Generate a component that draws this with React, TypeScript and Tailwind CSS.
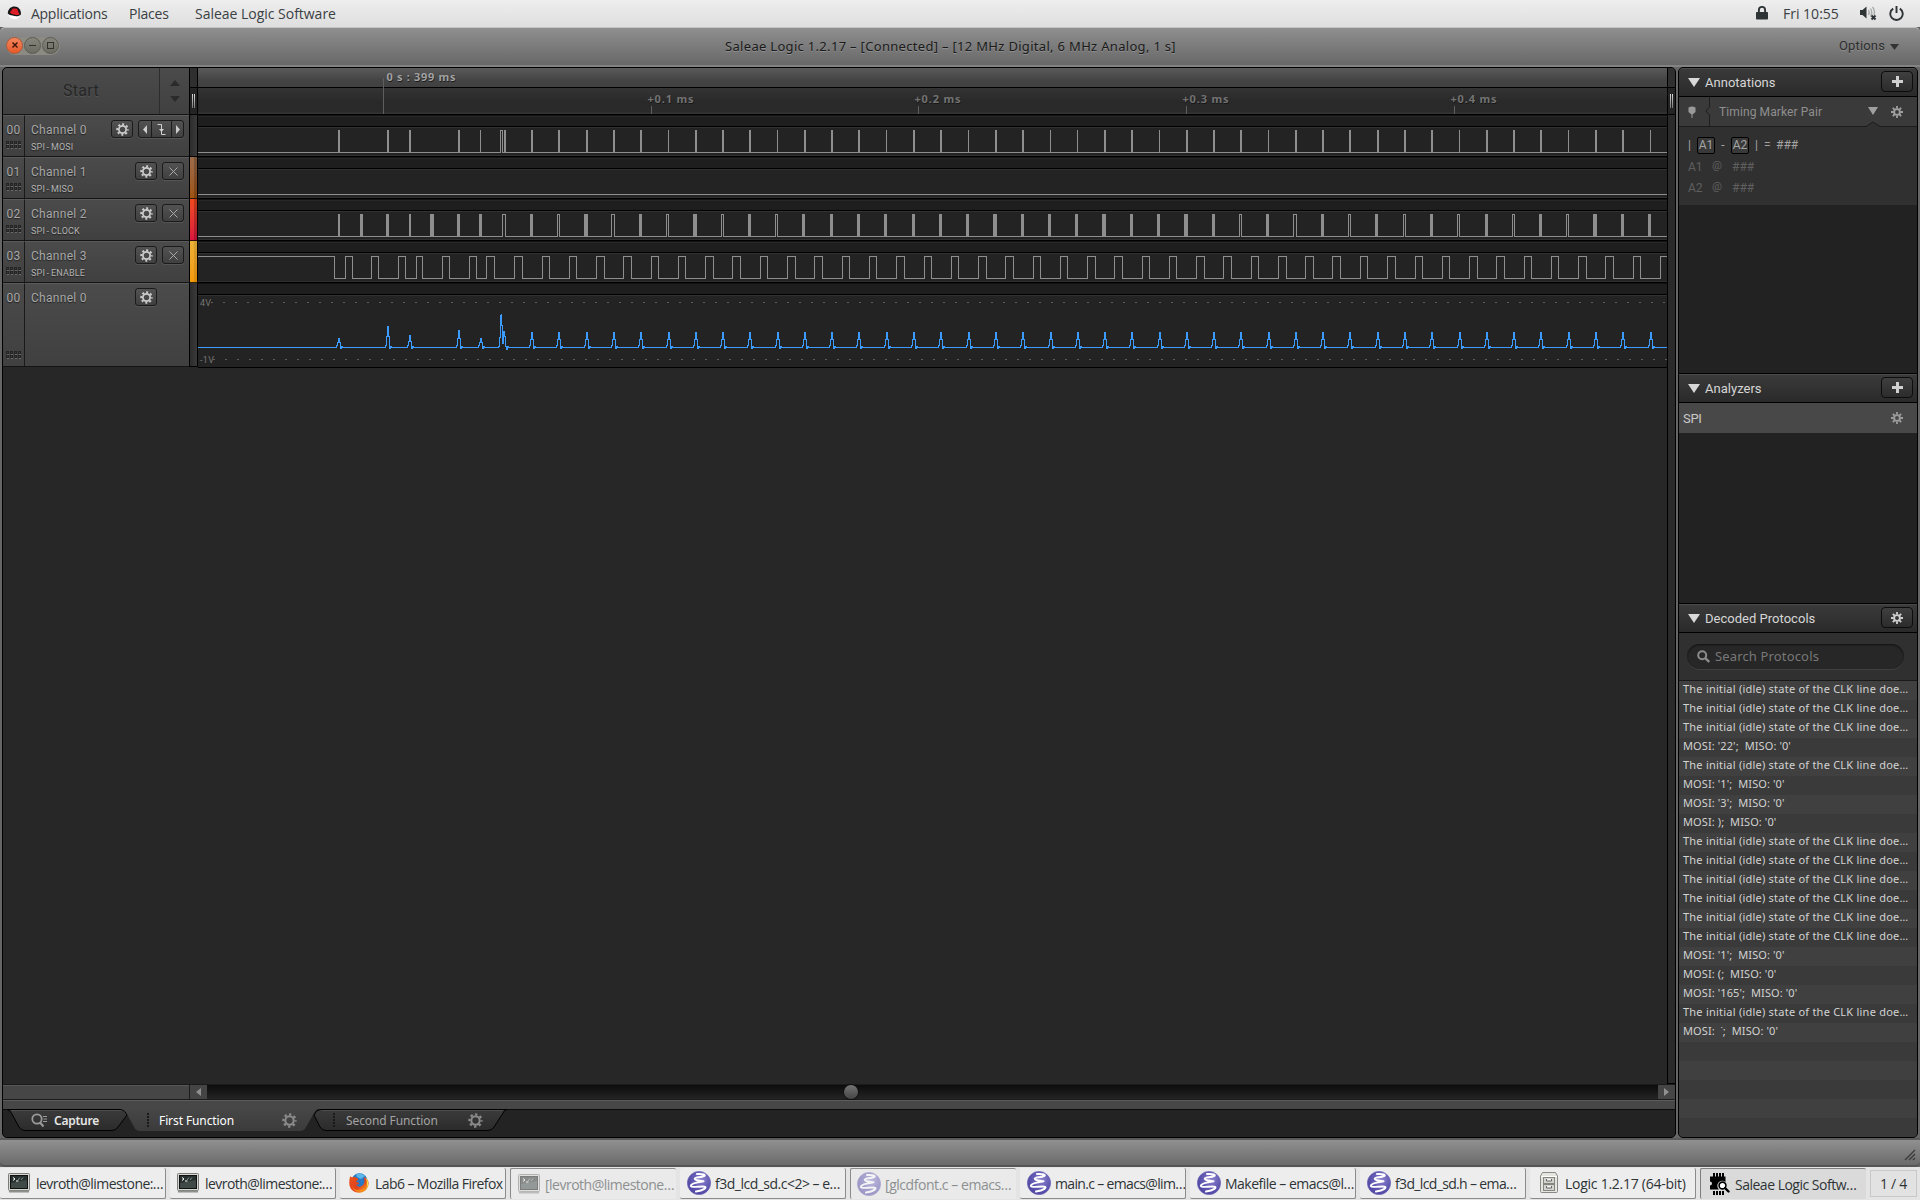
import React from "react";

/* ---------- signal data (window x coordinates) ---------- */

const ORIGIN = 198;

type Pulse = [number, number];

const MOSI: Pulse[] = [
  [338, 2], [387, 2], [409, 2], [458, 2], [480, 1], [504, 2], [531, 2], [558, 2], [586, 2], [613, 2],
  [640, 2], [668, 1], [695, 2], [722, 2], [749, 2], [777, 1], [804, 2], [831, 2], [858, 2], [886, 1],
  [913, 2], [940, 2], [968, 1], [995, 2], [1022, 2], [1050, 1], [1077, 1], [1104, 2], [1131, 2], [1159, 1],
  [1186, 2], [1213, 2], [1240, 2], [1268, 1], [1295, 2], [1322, 2], [1349, 2], [1377, 2], [1404, 2],
  [1431, 2], [1459, 1], [1486, 2], [1513, 2], [1540, 2], [1568, 1], [1595, 2], [1622, 2], [1650, 1],
];
const MOSI_HOLLOW: Pulse[] = [[500, 3]];

const CLOCK: Pulse[] = [
  [338, 2], [360, 3], [386, 3], [409, 2], [430, 4], [457, 3], [479, 3], [530, 3], [584, 4], [639, 3],
  [693, 4], [748, 3], [802, 3], [830, 3], [857, 3], [884, 3], [912, 3], [939, 3], [966, 3], [993, 4],
  [1021, 3], [1048, 3], [1075, 3], [1102, 4], [1130, 3], [1157, 3], [1184, 4], [1212, 3], [1266, 3],
  [1321, 3], [1375, 3], [1430, 3], [1485, 3], [1539, 3], [1593, 4], [1621, 3], [1648, 3],
];
const CLOCK_HOLLOW: Pulse[] = [
  [502, 4], [557, 3], [611, 4], [666, 3], [721, 3], [775, 3], [1239, 3], [1293, 4], [1348, 3], [1403, 3],
  [1457, 3], [1512, 3], [1566, 3],
];

const ENABLE: Pulse[] = [
  [345, 352], [371, 378], [398, 405], [416, 422], [442, 449], [469, 476], [486, 494], [514, 522],
  [542, 549], [569, 576], [596, 604], [623, 631], [651, 658], [678, 685], [705, 713], [732, 740],
  [760, 767], [787, 795], [814, 822], [842, 849], [869, 876], [896, 904], [924, 931], [951, 958],
  [978, 986], [1005, 1013], [1033, 1040], [1060, 1067], [1087, 1095], [1114, 1122], [1142, 1149],
  [1169, 1176], [1196, 1204], [1223, 1231], [1251, 1258], [1278, 1286], [1305, 1313], [1332, 1340],
  [1360, 1367], [1387, 1395], [1415, 1422], [1442, 1449], [1469, 1477], [1496, 1504], [1524, 1531],
  [1551, 1558], [1578, 1586], [1605, 1613], [1633, 1640],
];

/* ---------- waveform drawings ---------- */

const STROKE = "#8e8e8e";

function PulseWave({ solid = [], hollow = [] }: { solid?: Pulse[]; hollow?: Pulse[] }) {
  return (
    <svg className="block" width={1469} height={27} shapeRendering="crispEdges">
      <rect x={0} y={24} width={1469} height={1} fill={STROKE} />
      {solid.map(([x, w]) => (
        <rect key={x} x={x - ORIGIN} y={2} width={w} height={23} fill={STROKE} />
      ))}
      {hollow.map(([x, w]) => (
        <g key={x}>
          <rect x={x - ORIGIN} y={2} width={w} height={23} fill={STROKE} />
          <rect x={x - ORIGIN + 1} y={3} width={w - 2} height={22} fill="#232323" />
        </g>
      ))}
    </svg>
  );
}

function EnableWave() {
  let d = `M0 2.5H${334 - ORIGIN + 0.5}V24.5`;
  for (const [a, b] of ENABLE) d += `H${a - ORIGIN + 0.5}V2.5H${b - ORIGIN + 0.5}V24.5`;
  d += `H${1660 - ORIGIN + 0.5}V2.5H1469`;
  return (
    <svg className="block" width={1469} height={27} shapeRendering="crispEdges">
      <path d={d} fill="none" stroke={STROKE} />
    </svg>
  );
}

function AnalogWave() {
  const base = 51.5;
  const tall: Record<number, number> = { 338: 42, 387: 30, 409: 39, 458: 34, 480: 42 };
  let d = `M0 ${base}`;
  for (const [x] of MOSI) {
    const c = x - ORIGIN + 0.5;
    if (x === 504) {
      const s = 500 - ORIGIN + 0.5;
      d += `H${s - 2}V50H${s - 1}V41H${s}V19H${s + 1}V18V29H${s + 2}V47H${s + 3}V35H${s + 4}V40H${s + 5}V50H${s + 6}V53H${s + 7}V50.5H${s + 8}V${base}`;
      continue;
    }
    const p = tall[x] ?? 36;
    const mid = p + (base - p) * 0.5;
    d += `H${c - 2}V49H${c - 1}V${mid}H${c}V${p}H${c + 1}V${mid}H${c + 2}V${base + 1}H${c + 3}V50.5H${c + 4}V${base}`;
  }
  d += `H1469`;
  return (
    <svg className="block" width={1469} height={81} shapeRendering="crispEdges">
      <path d="M13 6.5H1469" stroke="#5c5c5c" strokeDasharray="2 10" />
      <path d="M15 63.5H1469" stroke="#5c5c5c" strokeDasharray="2 10" />
      <text x={2} y={10} fontSize={9} textLength={11} fill="#777" fontFamily="Roboto, sans-serif">4V</text>
      <text x={2} y={67} fontSize={9} textLength={14} fill="#777" fontFamily="Roboto, sans-serif">-1V</text>
      <path d={d} fill="none" stroke="#3c9bff" />
    </svg>
  );
}

function Ruler() {
  const marks: [number, string][] = [[651, "+0.1 ms"], [918, "+0.2 ms"], [1186, "+0.3 ms"], [1454, "+0.4 ms"]];
  return (
    <svg className="block" width={1469} height={46} fontFamily='"Noto Sans", sans-serif' fontWeight={700} fontSize={11}>
      <path d="M0 19.5H1469" stroke="#000" shapeRendering="crispEdges" />
      <path d="M185.5 10V46" stroke="#5e5e5e" shapeRendering="crispEdges" />
      <text x={189} y={14} textLength={69} fill="#1c1c1c">0 s : 399 ms</text>
      <text x={188.5} y={13} textLength={69} fill="#a2a2a2">0 s : 399 ms</text>
      {marks.map(([x, label]) => (
        <g key={x}>
          <path d={`M${x - ORIGIN + 0.5} 38V46`} stroke="#5e5e5e" shapeRendering="crispEdges" />
          <text x={x - ORIGIN - 3} y={36} textLength={46} fill="#161616">{label}</text>
          <text x={x - ORIGIN - 3.5} y={35} textLength={46} fill="#737373">{label}</text>
        </g>
      ))}
    </svg>
  );
}

/* ---------- icons ---------- */

function Gear({ size = 14, color = "#cdcdcd", className = "" }: { size?: number; color?: string; className?: string }) {
  return (
    <svg className={`shrink-0 ${className}`} width={size} height={size} viewBox="0 0 14 14" fill="none" stroke={color}>
      <circle cx={7} cy={7} r={3.9} strokeWidth={1.9} />
      <circle cx={7} cy={7} r={5.7} strokeWidth={2} strokeDasharray="2.2 2.277" strokeDashoffset={1.1} />
    </svg>
  );
}

function SmallGear({ color }: { color: string }) {
  return (
    <svg className="shrink-0" width={12} height={12} viewBox="0 0 12 12" fill="none" stroke={color}>
      <circle cx={6} cy={6} r={2.9} strokeWidth={1.9} />
      <path d="M6 0V2.6M6 9.4V12M0 6H2.6M9.4 6H12M1.8 1.8L3.6 3.6M8.4 8.4L10.2 10.2M1.8 10.2L3.6 8.4M8.4 3.6L10.2 1.8" strokeWidth={1.8} />
    </svg>
  );
}

function Grip() {
  const xs = [0, 4, 8, 12];
  return (
    <svg width={16} height={8} shapeRendering="crispEdges">
      {[0, 4].map((y) =>
        xs.map((x) => (
          <g key={`${x}-${y}`}>
            <rect x={x} y={y} width={3} height={3} fill="#242424" />
            <rect x={x + 1} y={y + 1} width={1} height={1} fill="#3c3c3c" />
            <rect x={x + 1} y={y + 3} width={2} height={1} fill="#6a6a6a" />
          </g>
        ))
      )}
    </svg>
  );
}

function TerminalIcon() {
  return (
    <svg className="shrink-0" width={22} height={20} viewBox="0 0 22 20">
      <rect x={0.5} y={0.5} width={21} height={17} rx={1} fill="#d5d7d2" stroke="#7b7d79" />
      <rect x={1} y={17.5} width={20} height={2} fill="#8e908b" />
      <rect x={2.5} y={2.5} width={17} height={13} fill="#27302e" stroke="#111" />
      <path d="M3 10L19 7V15H3Z" fill="#3f4a47" />
      <path d="M5 4.5L7 6L5 7.5M8 8H10.5" stroke="#fff" fill="none" />
      <path d="M10 7L12 4.5M13 7L15 4.5" stroke="#9aa" fill="none" strokeWidth={0.8} />
    </svg>
  );
}

function EmacsIcon() {
  return (
    <svg className="shrink-0" width={24} height={24} viewBox="0 0 24 24">
      <defs>
        <radialGradient id="em" cx="0.6" cy="0.35" r="0.75">
          <stop offset="0" stopColor="#8e85d0" />
          <stop offset="0.55" stopColor="#5f57b0" />
          <stop offset="1" stopColor="#4a3f9c" />
        </radialGradient>
      </defs>
      <circle cx={12} cy={12} r={11.6} fill="url(#em)" stroke="#6c66b4" strokeWidth={0.7} />
      <path
        d="M10 3C16 2.6 19.5 4 17 5.2C13.5 6.7 8 6 7.8 7.8C7.7 9.6 13 9.8 16.5 10.3C12.5 10.9 3.6 12.4 3.8 14.9C4 17 12.5 15.2 17.4 15.7C20.5 16.2 17 19.4 9 20.6"
        stroke="#fff"
        strokeWidth={2}
        fill="none"
        strokeLinecap="round"
        strokeLinejoin="round"
      />
    </svg>
  );
}

function FirefoxIcon() {
  return (
    <svg className="shrink-0" width={20} height={20} viewBox="0 0 20 20">
      <defs>
        <linearGradient id="ffx" x1="0" y1="0" x2="1" y2="1">
          <stop offset="0" stopColor="#e8541a" />
          <stop offset="0.55" stopColor="#e2401b" />
          <stop offset="1" stopColor="#ffc21f" />
        </linearGradient>
      </defs>
      <circle cx={10.5} cy={8.5} r={8.3} fill="#2a78c4" />
      <path d="M7 1.5C10 0 14 0.5 16 3L12 6L8 4Z" fill="#59b7ea" />
      <path
        d="M1.2 3.2C1.8 4 2.6 4.3 3.6 4.2C5 3.6 6.5 4 7.5 5C9 5.3 9.6 6 9 6.8C8 7.8 7 8 7.2 9C8.6 9.4 9.8 9.6 10.2 10.2C9 11.6 8 11.8 7 11.6C8.4 14.6 13.4 14.3 15 10.5C15.8 8.5 15.5 6 14.6 4C17.4 5 19 7 19.6 9.6C20 15 16 19.8 10.2 19.8C4.2 19.8 0.2 15.4 0.3 10C0.3 7.2 0.6 5 1.2 3.2Z"
        fill="url(#ffx)"
      />
      <path d="M16.6 4.6C19.4 7 20 12 17.6 15.6C18.4 12 18 8 16.6 4.6Z" fill="#ffdf3d" />
      <path d="M3 13C5 18 12 19 16 15C13 20.5 4.5 19.5 3 13Z" fill="#ff9a1f" />
    </svg>
  );
}

function CabinetIcon() {
  return (
    <svg className="shrink-0" width={18} height={22} viewBox="0 0 18 22">
      <path d="M2.5 0.5H15.5L17.5 4V19.5Q17.5 20.5 16.5 20.5H1.5Q0.5 20.5 0.5 19.5V4Z" fill="#e4e4e0" stroke="#888a85" />
      <path d="M1 4.5H17" stroke="#fff" />
      <rect x={3.5} y={5.5} width={11} height={6} fill="#d3d4cf" stroke="#85877f" />
      <rect x={3.5} y={12.5} width={11} height={6} fill="#d3d4cf" stroke="#85877f" />
      <path d="M6.5 7V9H11.5V7M6.5 14V16H11.5V14" stroke="#666" fill="#f5f5f5" />
    </svg>
  );
}

function ChipIcon() {
  return (
    <svg className="shrink-0" width={20} height={24} viewBox="0 0 20 24">
      <path d="M4 1V5M7 1V5M10 1V5M13 1V5M4 19V23M7 19V23M10 19V23M13 19V23" stroke="#000" strokeWidth={2} />
      <path d="M0 4.5H15.5V10A4.5 4.5 0 0 0 9 17.5H0V13.5A2 2 0 0 0 0 9.5Z" fill="#000" />
      <circle cx={12.5} cy={13.5} r={3.4} fill="#fff" stroke="#000" strokeWidth={1.6} />
      <path d="M15 16L18.5 19.5" stroke="#000" strokeWidth={2.4} strokeLinecap="round" />
    </svg>
  );
}

/* ---------- desktop top bar ---------- */

function TopBar() {
  return (
    <div className="flex h-[27px] items-center bg-gradient-to-b from-[#eeeeee] to-[#dedede] px-2 pb-px text-[14px] text-[#3a4043]">
      <svg width={15} height={14} viewBox="0 0 15 14" className="ml-[-1px]">
        <circle cx={7.5} cy={7} r={6.2} fill="#fff" />
        <path d="M0.8 7.5C0.8 3 4 0.4 7.5 0.4C11.5 0.4 14.2 3.5 14 8.2C12 11 8.5 10.4 5.5 9.6C3.5 9.2 2 8.8 0.8 7.5Z" fill="#161616" />
        <path d="M3 6.4Q3.4 4.9 4.4 4.8Q4.8 2.2 6.5 2.4Q7.8 2.8 9 2.4Q11 2.7 11.3 6.2Q13 7.3 12.2 8.4Q9.5 9.6 6 8.2Q3.4 7.6 3 6.4Z" fill="#dc1f26" />
      </svg>
      <span className="ml-[9px] w-[98px] tracking-[-0.28px]">Applications</span>
      <span className="w-[66px] tracking-[-0.22px]">Places</span>
      <span className="tracking-[-0.02px]">Saleae Logic Software</span>
      <div className="ml-auto flex items-center pr-[8px]">
        <svg width={12} height={14} viewBox="0 0 12 14">
          <rect x={0} y={6} width={12} height={7.5} rx={0.8} fill="#2e3436" />
          <path d="M2.9 7V4A3.1 3.1 0 0 1 9.1 4V7" stroke="#2e3436" strokeWidth={1.9} fill="none" />
        </svg>
        <span className="ml-[15px] w-[77px] tracking-[0px]">Fri 10:55</span>
        <svg width={17} height={16} viewBox="0 0 17 16">
          <path d="M0 5H2.5L6.5 1.5V13.5L2.5 10H0Z" fill="#2e3436" />
          <path d="M8.5 5Q10 7.5 8.5 10M10.5 3.5Q13 7.5 10.5 11.5M12.5 1.8Q15.5 6 14 10" stroke="#a9acad" fill="none" strokeWidth={1.4} />
          <path d="M11.5 10.5L15.5 14.5M15.5 10.5L11.5 14.5" stroke="#2e3436" strokeWidth={2} />
        </svg>
        <svg className="ml-[12px]" width={15} height={15} viewBox="0 0 15 15" fill="none" stroke="#2e3436" strokeWidth={1.9}>
          <path d="M4.2 2.6A6.2 6.2 0 1 0 10.8 2.6M7.5 0V7" />
        </svg>
      </div>
    </div>
  );
}

function TitleBar() {
  return (
    <div className="flex h-[40px] items-center rounded-t-[5px] border-t border-[#c4c4c4] border-b-2 border-b-[#838383] bg-gradient-to-b from-[#8f8f8f] to-[#686868] pr-[21px] pl-1.5">
      <div className="-mt-0.5 flex h-[18px] w-[54px] rounded-full bg-[#8b8b83]">
        <span className="flex size-[17px] items-center justify-center rounded-full border border-[#a85a3c] bg-gradient-to-b from-[#f5855c] to-[#e75a27]">
          <svg width={6} height={6} viewBox="0 0 6 6"><path d="M0.5 0.5L5.5 5.5M5.5 0.5L0.5 5.5" stroke="#3a1408" strokeWidth={1.4} /></svg>
        </span>
        <span className="ml-px flex size-[17px] items-center justify-center rounded-full border border-[#5c5c55] bg-gradient-to-b from-[#85857c] to-[#6c6c63]">
          <span className="h-px w-[7px] bg-[#33332e]" />
        </span>
        <span className="ml-px flex size-[17px] items-center justify-center rounded-full border border-[#5c5c55] bg-gradient-to-b from-[#85857c] to-[#6c6c63]">
          <span className="size-[7px] border border-[#33332e]" />
        </span>
      </div>
      <div className="flex-1 pl-[2px] text-center font-['Noto_Sans'] text-[13px] tracking-[0.31px] text-[#1b1b1b] [text-shadow:0_1px_0_#909090]">
        Saleae Logic 1.2.17 – [Connected] – [12 MHz Digital, 6 MHz Analog, 1 s]
      </div>
      <div className="-mt-px flex items-center gap-[5px] font-['Roboto'] text-[13px] tracking-[0.15px] text-[#2e2e2e] [text-shadow:0_1px_0_#8d8d8d]">
        Options
        <svg className="mt-0.5" width={9} height={6}><path d="M0 0H9L4.5 6Z" fill="#333" /></svg>
      </div>
    </div>
  );
}

/* ---------- channel sidebar ---------- */

const BTN = "flex h-[18px] items-center justify-center rounded-[3px] border border-[#1b1b1b] bg-gradient-to-b from-[#525252] to-[#404040] shadow-[0_1px_0_#555]";

type Channel = { num: string; name: string; sub?: string; kind: "trigger" | "close" | "plain" };

const CHANNELS: Channel[] = [
  { num: "00", name: "Channel 0", sub: "SPI - MOSI", kind: "trigger" },
  { num: "01", name: "Channel 1", sub: "SPI - MISO", kind: "close" },
  { num: "02", name: "Channel 2", sub: "SPI - CLOCK", kind: "close" },
  { num: "03", name: "Channel 3", sub: "SPI - ENABLE", kind: "close" },
];

function ChannelRow({ c, tall = false }: { c: Channel; tall?: boolean }) {
  return (
    <div className={`flex border-b border-[#141414] font-['Roboto'] text-[12px] text-[#a8a8a8] [text-shadow:0_1px_1px_#222] ${tall ? "h-[84px]" : "h-[42px]"}`}>
      <div className="flex w-[22px] flex-col items-center justify-between border-t border-r border-t-[#5a5a5a] border-r-[#1a1a1a] bg-gradient-to-b from-[#4a4a4a] to-[#404040] pt-[6px] pb-[7px] leading-4">
        <span className="tracking-[0.2px]">{c.num}</span>
        <Grip />
      </div>
      <div className="flex flex-1 border-t border-[#5a5a5a] bg-gradient-to-b from-[#4b4b4b] to-[#404040] pt-[4px] pr-[5px] pl-[6px]">
        <div className="flex-1">
          <div className="mt-[2px] leading-4 tracking-[0.3px] whitespace-nowrap">{c.name}</div>
          {c.sub && <div className="mt-[2px] text-[9px] leading-[14px] tracking-[0.18px] [word-spacing:-0.8px] whitespace-nowrap text-[#b4b4b4]">{c.sub}</div>}
        </div>
        <div className={`${BTN} w-[22px]`}><Gear size={13} /></div>
        {c.kind === "trigger" && (
          <div className={`${BTN} ml-[5px] w-[46px]`}>
            <span className="flex h-full w-[12px] items-center justify-center"><svg width={4} height={9}><path d="M4 0V9L0 4.5Z" fill="#ccc" /></svg></span>
            <span className="flex h-full flex-1 items-center justify-center border-x border-[#1b1b1b]">
              <svg width={9} height={11} viewBox="0 0 9 11" fill="none" stroke="#d0d0d0"><path d="M0.5 0.5H4.5V10.5H8.5" /><path d="M2 5H7L4.5 8Z" fill="#d0d0d0" stroke="none" /></svg>
            </span>
            <span className="flex h-full w-[11px] items-center justify-center"><svg width={4} height={9}><path d="M0 0V9L4 4.5Z" fill="#ccc" /></svg></span>
          </div>
        )}
        {c.kind === "close" && (
          <div className={`${BTN} ml-[5px] w-[22px]`}>
            <svg width={9} height={9}><path d="M0.5 0.5L8.5 8.5M8.5 0.5L0.5 8.5" stroke="#a8a8a8" /></svg>
          </div>
        )}
        {c.kind === "plain" && <div className="w-[27px]" />}
      </div>
    </div>
  );
}

function Sidebar() {
  return (
    <div className="w-[186px] shrink-0">
      <div className="flex h-[47px] rounded-tl-[4px] border-b border-[#141414] bg-gradient-to-b from-[#4b4b4b] to-[#404040]">
        <div className="flex w-[157px] items-center justify-center border-r border-[#2d2d2d] font-['Roboto'] text-[16px] tracking-[0.3px] text-[#262626] [text-shadow:0_1px_0_#555]">
          Start
        </div>
        <div className="flex flex-1 flex-col items-center justify-center gap-[10px]">
          <svg width={10} height={6}><path d="M0 6H10L5 0Z" fill="#2b2b2b" /></svg>
          <svg width={10} height={6}><path d="M0 0H10L5 6Z" fill="#2b2b2b" /></svg>
        </div>
      </div>
      {CHANNELS.map((c) => <ChannelRow key={c.num} c={c} />)}
      <ChannelRow tall c={{ num: "00", name: "Channel 0", kind: "plain" }} />
    </div>
  );
}

/* ---------- wave area ---------- */

function Handle() {
  return (
    <div className="flex h-[26px] items-center justify-center gap-px bg-[#242424]">
      <span className="h-[14px] w-px bg-gradient-to-b from-[#dadada] to-[#777]" />
      <span className="h-[14px] w-px bg-gradient-to-b from-[#dadada] to-[#777]" />
    </div>
  );
}

function ColorSplitter() {
  return (
    <div className="flex w-[9px] shrink-0 flex-col border-x border-black">
      <div className="h-[20px] border-b border-black bg-[#2f2f2f]" />
      <Handle />
      <div className="h-[43px] border-y border-black bg-gradient-to-r from-[#2c2c2c] to-[#3a3a3a]" />
      <div className="flex h-[42px] border-b border-[#2a160a] bg-gradient-to-b from-[#9c6c4a] to-[#a0540f]"><div className="ml-auto w-[3px] bg-black/20" /></div>
      <div className="flex h-[42px] border-b border-[#310a0c] bg-gradient-to-b from-[#f04a1e] to-[#dc143c]"><div className="ml-auto w-[3px] bg-black/20" /></div>
      <div className="flex h-[42px] border-b border-[#332507] bg-gradient-to-b from-[#edb136] to-[#f59a06]"><div className="ml-auto w-[3px] bg-black/10" /></div>
      <div className="h-[84px] border-b border-black bg-gradient-to-r from-[#2c2c2c] to-[#3a3a3a]" />
    </div>
  );
}

function Lane({ children }: { children: React.ReactNode }) {
  return (
    <div className="border-b border-black bg-[#232323]">
      <div className="h-[12px] border-t border-b border-t-[#121212] border-b-black bg-[#1e1e1e]">
        <div className="h-px bg-[#282828]" />
      </div>
      <div className="h-px bg-[#313131]" />
      {children}
      <div className="h-px bg-[#303030]" />
    </div>
  );
}

function Waves() {
  return (
    <div className="w-[1469px] shrink-0">
      <div className="h-[47px] border-b border-black bg-[linear-gradient(to_bottom,#5a5a5a_0px,#444_12px,#404040_19px,#343434_20px,#292929_34px,#2a2a2a_44px,#333_45px)]">
        <Ruler />
      </div>
      <Lane><PulseWave solid={MOSI} hollow={MOSI_HOLLOW} /></Lane>
      <Lane><PulseWave /></Lane>
      <Lane><PulseWave solid={CLOCK} hollow={CLOCK_HOLLOW} /></Lane>
      <Lane><EnableWave /></Lane>
      <div className="h-[85px] overflow-hidden border-b border-black bg-[#232323]">
        <div className="h-[12px] border-t border-b border-t-[#121212] border-b-black bg-[#1e1e1e]" />
        <div className="h-px bg-[#313131]" />
        <AnalogWave />
      </div>
    </div>
  );
}

/* ---------- bottom scroll bar and tabs ---------- */

function ScrollRow() {
  return (
    <div className="flex h-[16px] border-y border-y-[#1b1b1b] bg-[#444]">
      <div className="w-[186px] border-t border-[#575757] bg-[#464646]" />
      <div className="flex w-[18px] items-center justify-center border-l border-[#1c1c1c] bg-[#454545]">
        <svg width={5} height={8}><path d="M5 0V8L0 4Z" fill="#909090" /></svg>
      </div>
      <div className="flex-1 bg-gradient-to-b from-[#0c0c0c] to-[#242424]">
        <div className="ml-[637px] size-[14px] rounded-full bg-gradient-to-b from-[#757575] to-[#454545] shadow-[0_0_0_1px_#111]" />
      </div>
      <div className="flex w-[17px] items-center justify-center bg-[#454545]">
        <svg width={5} height={8}><path d="M0 0V8L5 4Z" fill="#909090" /></svg>
      </div>
    </div>
  );
}

function TabGrip() {
  return (
    <svg width={3} height={15} shapeRendering="crispEdges">
      {[0, 3, 6, 9, 12].map((y) => <rect key={y} x={0} y={y} width={2} height={2} fill="#1a1a1a" />)}
    </svg>
  );
}

function Tabs() {
  return (
    <div className="relative h-[28px] rounded-bl-[5px] bg-[#232323]">
      <svg className="absolute top-0 left-0" width={1672} height={23} viewBox="3 0 1672 23">
        <defs>
          <linearGradient id="tb" x1="0" y1="0" x2="0" y2="1"><stop offset="0" stopColor="#3b3b3b" /><stop offset="1" stopColor="#2b2b2b" /></linearGradient>
          <linearGradient id="ta" x1="0" y1="0" x2="0" y2="1"><stop offset="0" stopColor="#464646" /><stop offset="1" stopColor="#3b3b3b" /></linearGradient>
        </defs>
        <path d="M0 0.5H1675" stroke="#0a0a0a" />
        <path d="M7 0.5Q10 1 12 5L19 18Q21 21.5 25 21.5H112Q116 21.5 118 18L127 6Q125 0.5 121 0.5Z" fill="url(#tb)" stroke="#000" />
        <path d="M320 0.5Q316 1 314 6L320 18Q322 21.5 326 21.5H488Q492 21.5 494 18L503 4Q504 1 507 0.5Z" fill="url(#tb)" stroke="#000" />
        <path d="M121 0Q125 1 127 5L134 18Q136 22 140 22H300Q304 22 306 18L314 4Q316 0 320 0Z" fill="url(#ta)" />
        <path d="M12 1.5H121M322 1.5H502" stroke="#4e4e4e" />
      </svg>
      <div className="relative flex h-[22px] items-center pt-px font-['Noto_Sans'] text-[12px] text-white">
        <svg className="ml-[28px]" width={17} height={15} viewBox="0 0 17 15" fill="none" stroke="#9a9a9a">
          <circle cx={6} cy={6} r={4.7} strokeWidth={1.8} />
          <path d="M9 9.5L12.5 13.5" strokeWidth={2} />
          <path d="M12 3.5H16M12.5 6H16M12 8.5H16" strokeWidth={1.2} />
        </svg>
        <span className="ml-[6px] w-[93px] text-[12px] font-semibold tracking-[-0.25px] text-[#e6e6e6]">Capture</span>
        <TabGrip />
        <span className="ml-[9px] w-[123px] tracking-[-0.1px]">First Function</span>
        <Gear size={15} color="#8c8c8c" />
        <span className="w-[36px]" />
        <TabGrip />
        <span className="ml-[10px] w-[122px] tracking-[-0.1px] text-[#a3a3a3]">Second Function</span>
        <Gear size={15} color="#8c8c8c" />
      </div>
    </div>
  );
}

/* ---------- right panel ---------- */

function PanelHeader({ title, gear = false }: { title: string; gear?: boolean }) {
  return (
    <div className="flex h-[28px] items-center border-t border-[#4a4a4a] bg-gradient-to-b from-[#3a3a3a] to-[#2a2a2a] pr-[4px] pl-[9px]">
      <svg className="-mt-px" width={12} height={9}><path d="M0 0H12L6 9Z" fill="#d8d8d8" /></svg>
      <span className="ml-[5px] flex-1 font-['Roboto'] text-[13px] tracking-[0.02px] text-[#d6d6d6]">{title}</span>
      <div className="-mt-[2px] flex h-[21px] w-[32px] items-center justify-center rounded-[4px] border border-[#0c0c0c] bg-gradient-to-b from-[#3f3f3f] to-[#2c2c2c]">
        {gear ? <SmallGear color="#cfcfcf" /> : <svg width={11} height={11} shapeRendering="crispEdges"><path d="M4 0H7V4H11V7H7V11H4V7H0V4H4Z" fill="#d0d0d0" /></svg>}
      </div>
    </div>
  );
}

const IDLE = "The initial (idle) state of the CLK line doe…";
const ROWS = [
  IDLE, IDLE, IDLE, "MOSI: '22';  MISO: '0'", IDLE, "MOSI: '1';  MISO: '0'", "MOSI: '3';  MISO: '0'",
  "MOSI: );  MISO: '0'", IDLE, IDLE, IDLE, IDLE, IDLE, IDLE, "MOSI: '1';  MISO: '0'", "MOSI: (;  MISO: '0'",
  "MOSI: '165';  MISO: '0'", IDLE, "MOSI:  ˙;  MISO: '0'", "", "", "", "", "",
];

function MarkerBox({ children }: { children: React.ReactNode }) {
  return <span className="flex h-[17px] w-[18px] items-center justify-center rounded-[2px] border border-black bg-[#393939]">{children}</span>;
}

function RightPanel() {
  return (
    <div className="flex w-[240px] shrink-0 flex-col overflow-hidden rounded-[5px] border border-black bg-[#222]">
      <PanelHeader title="Annotations" />
      <div className="relative flex h-[31px] items-center border-y border-t-black border-b-[#1c1c1c] bg-[#3a3a3a] pr-[14px] font-['Roboto'] text-[12px] text-[#8f8f8f]">
        <svg className="ml-[9px]" width={8} height={12}><path d="M0.5 1.5Q4 -0.5 7.5 1.5V6L4.5 8.5V12H3.5V8.5L0.5 6Z" fill="#999" /></svg>
        <svg className="ml-[9px]" width={6} height={29}><path d="M4.5 0V10L1 14L4.5 18V29" fill="none" stroke="#1e1e1e" /></svg>
        <span className="ml-[8px] flex-1 pt-px tracking-[0.1px]">Timing Marker Pair</span>
        <svg className="-mt-[2px]" width={10} height={8}><path d="M0 0H10L5 8Z" fill="#a0a0a0" /></svg>
        <span className="w-[13px]" />
        <SmallGear color="#a0a0a0" />
        <svg className="absolute right-[37px] -bottom-px" width={14} height={6}><path d="M0 5.5L7 1L14 5.5V6H0Z" fill="#303030" /><path d="M0 5.5L7 1L14 5.5" stroke="#1c1c1c" fill="none" /></svg>
      </div>
      <div className="h-[78px] bg-[#303030] pt-[8px] pl-[9px] font-['Roboto'] text-[12px] text-[#a4a4a4]">
        <div className="mb-px flex h-[20px] items-center">
          <span className="w-[9px]">|</span>
          <MarkerBox>A1</MarkerBox>
          <span className="w-[16px] text-center">-</span>
          <MarkerBox>A2</MarkerBox>
          <span className="ml-[6px] w-[9px]">|</span>
          <span className="w-[12px]">=</span>
          <span>###</span>
        </div>
        {["A1", "A2"].map((m) => (
          <div key={m} className="flex h-[21px] items-center text-[#5f5f5f]">
            <span className="w-[24px]">{m}</span>
            <span className="w-[20px] text-[11px]">@</span>
            <span>###</span>
          </div>
        ))}
      </div>
      <div className="h-[169px] border-b border-black" />
      <PanelHeader title="Analyzers" />
      <div className="flex h-[31px] items-center border-t border-black bg-[#484848] pr-[14px] pb-px pl-[4px] font-['Roboto'] text-[13px] text-[#c8c8c8]">
        <span className="flex-1 pt-[3px] tracking-[-0.3px]">SPI</span>
        <SmallGear color="#9c9c9c" />
      </div>
      <div className="h-[171px] border-b border-black" />
      <PanelHeader title="Decoded Protocols" gear />
      <div className="h-[49px] border-y border-t-black border-b-[#1a1a1a] bg-[#303030] px-[8px] pt-[11px]">
        <div className="flex h-[25px] w-[217px] items-center rounded-full bg-[#272727] pl-[10px] shadow-[inset_0_1px_2px_#111,0_1px_0_#404040]">
          <svg width={13} height={13} viewBox="0 0 13 13" fill="none" stroke="#8c8c8c"><circle cx={5.2} cy={5.2} r={4} strokeWidth={2} /><path d="M8.2 8.2L12.2 12" strokeWidth={2.4} /></svg>
          <span className="ml-[5px] font-['Noto_Sans'] text-[13px] tracking-[0.15px] text-[#787878]">Search Protocols</span>
        </div>
      </div>
      {ROWS.map((r, i) => (
        <div key={i} className={`h-[19px] shrink-0 pl-[4px] font-['Noto_Sans'] text-[11px] leading-[16px] whitespace-pre text-[#d2d2d2] ${i % 2 ? "bg-[#3a3a3a]" : "bg-[#404040]"} ${r === IDLE ? "tracking-[0.23px]" : "tracking-[0.1px]"}`}>
          {r}
        </div>
      ))}
    </div>
  );
}

/* ---------- task bar ---------- */

type Task = { icon: React.ReactNode; label: string; state?: "min" | "active"; pad: string };

const TASKS: Task[] = [
  { icon: <TerminalIcon />, label: "levroth@limestone:…", pad: "pl-[8px] gap-[6px] tracking-[-0.55px]" },
  { icon: <TerminalIcon />, label: "levroth@limestone:…", pad: "pl-[7px] gap-[6px] tracking-[-0.55px]" },
  { icon: <FirefoxIcon />, label: "Lab6 – Mozilla Firefox", pad: "pl-[9px] gap-[6px] tracking-[-0.58px]" },
  { icon: <TerminalIcon />, label: "[levroth@limestone…", state: "min", pad: "pl-[7px] gap-[5px] tracking-[-0.5px]" },
  { icon: <EmacsIcon />, label: "f3d_lcd_sd.c<2> – e…", pad: "pl-[7px] gap-[4px] tracking-[-0.5px]" },
  { icon: <EmacsIcon />, label: "[glcdfont.c – emacs…", state: "min", pad: "pl-[6px] gap-[4px] tracking-[-0.45px]" },
  { icon: <EmacsIcon />, label: "main.c – emacs@lim…", pad: "pl-[7px] gap-[4px] tracking-[-0.66px]" },
  { icon: <EmacsIcon />, label: "Makefile – emacs@l…", pad: "pl-[7px] gap-[4px] tracking-[-0.5px]" },
  { icon: <EmacsIcon />, label: "f3d_lcd_sd.h – ema…", pad: "pl-[7px] gap-[4px] tracking-[-0.65px]" },
  { icon: <CabinetIcon />, label: "Logic 1.2.17 (64-bit)", pad: "pl-[10px] gap-[7px] tracking-[-0.26px]" },
  { icon: <ChipIcon />, label: "Saleae Logic Softw…", state: "active", pad: "pl-[9px] gap-[5px] tracking-[-0.5px]" },
];

function TaskBar() {
  return (
    <div className="flex h-[33px] gap-[4px] bg-[#e4e4e4] pt-px text-[14px] text-[#2e3436]">
      {TASKS.map((t, i) => (
        <div
          key={i}
          className={`flex h-[31px] w-[166px] shrink-0 items-center overflow-hidden rounded-[2px] whitespace-nowrap ${t.pad} ${
            t.state === "min"
              ? "border-t border-l border-[#8b8b8b] bg-[#eaeaea]"
              : t.state === "active"
                ? "border-t border-l border-[#7e7e7e] bg-[#dadada]"
                : "border-r border-b border-[#8b8b8b] bg-[#ededed]"
          }`}
        >
          <span className={t.state === "min" ? "flex items-center opacity-50" : "flex items-center"}>{t.icon}</span>
          <span className={t.state === "min" ? "text-[#8d9091]" : ""}>{t.label}</span>
        </div>
      ))}
      <div className="mt-[2px] flex h-[27px] w-[47px] items-center justify-center border border-[#c8c8c8] bg-[#e2e2e2] tracking-[-0.3px] whitespace-nowrap">1 / 4</div>
    </div>
  );
}

export default function App() {
  return (
    <div className="flex h-[1200px] w-[1920px] flex-col overflow-hidden bg-[#666] font-['Open_Sans',sans-serif] leading-normal">
      <TopBar />
      <div className="h-[40px] bg-[#5c5c5c]">
        <TitleBar />
      </div>
      <div className="flex h-[1071px] gap-[2px] pl-[2px]">
        <div className="flex w-[1674px] shrink-0 flex-col overflow-hidden rounded-[5px] border border-black bg-[#272727]">
          <div className="flex h-[1017px] items-start">
            <Sidebar />
            <ColorSplitter />
            <Waves />
            <div className="h-full flex-1 border-b border-l border-black bg-[#2a2a2a]">
              <div className="h-[20px] border-b border-black bg-[#2f2f2f]" />
              <Handle />
              <div className="h-px bg-black" />
            </div>
          </div>
          <ScrollRow />
          <div className="h-[9px] shrink-0 border-t border-[#5c5c5c] bg-[#474747]" />
          <Tabs />
        </div>
        <RightPanel />
      </div>
      <div className="flex h-[29px] items-end justify-end rounded-b-[5px] border-t-2 border-b-2 border-t-[#5a5a5a] border-b-[#555] bg-gradient-to-b from-[#909090] to-[#6b6b6b] pr-[4px] pb-[4px]">
        <svg width={12} height={12}><path d="M1 11L11 1M5 11L11 5M9 11L11 9" stroke="#3a3a3a" strokeWidth={1.3} /></svg>
      </div>
      <TaskBar />
    </div>
  );
}
